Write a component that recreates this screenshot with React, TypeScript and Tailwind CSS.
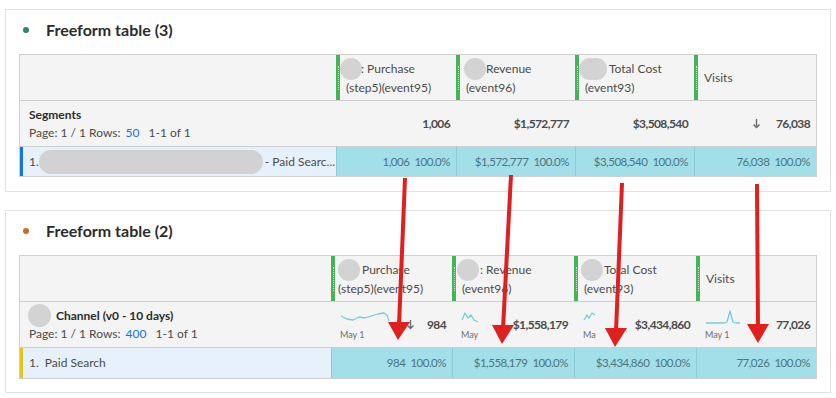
import React from 'react';

function Avatar({ className = '' }: { className?: string }) {
  return <span className={`inline-block w-[22px] h-[22px] rounded-full bg-[#d3d3d3] shrink-0 ${className}`} />;
}

function Handle() {
  return (
    <div className="w-1 self-stretch bg-[#44b455] flex items-center justify-center shrink-0">
      <div className="h-6 border-l border-dotted border-white/70" />
    </div>
  );
}

function HeadCell({ children, center = false }: { children?: React.ReactNode; center?: boolean }) {
  return (
    <div className="flex bg-[#f4f4f4] min-w-0">
      <Handle />
      <div
        className={`flex-1 min-w-0 pl-[6px] text-[12px] leading-[19px] text-[#4b4b4b] ${
          center ? 'flex items-center' : 'pt-[4px]'
        }`}
      >
        {children}
      </div>
    </div>
  );
}

function DownArrow() {
  return (
    <svg width="9" height="11" viewBox="0 0 9 11" className="shrink-0">
      <path d="M4.5 1 V9 M1.5 6.5 L4.5 9.5 L7.5 6.5" stroke="#6b6b6b" strokeWidth="1.4" fill="none" />
    </svg>
  );
}

function Total({ value, arrow = false }: { value: string; arrow?: boolean }) {
  return (
    <div className="flex items-center justify-end gap-[15px] pr-[6px] font-bold text-[12px] tracking-[-0.6px] text-[#4b4b4b]">
      {arrow && <DownArrow />}
      <span>{value}</span>
    </div>
  );
}

function Spark({
  d,
  w,
  label,
  value,
  arrow = false,
}: {
  d: string;
  w: number;
  label: string;
  value: string;
  arrow?: boolean;
}) {
  return (
    <div className="flex items-center justify-between pl-[9px] pr-[6px] min-w-0">
      <div className="flex flex-col self-stretch pt-[8px] min-w-0">
        <svg width={w} height="14" viewBox={`0 0 ${w} 14`} className="shrink-0">
          <path d={d} stroke="#6fd0d8" strokeWidth="1.3" fill="none" strokeLinejoin="round" />
        </svg>
        <span className="mt-[6px] text-[9px] leading-[10px] text-[#6e6e6e] whitespace-nowrap">{label}</span>
      </div>
      <div className="flex items-center gap-[12px] font-bold text-[12px] tracking-[-0.6px] text-[#4b4b4b]">
        {arrow && <DownArrow />}
        <span>{value}</span>
      </div>
    </div>
  );
}

function DataCell({ value }: { value: string }) {
  return (
    <div className="flex items-center justify-end gap-[5px] pr-[6px] bg-[#a2dfe8] border-l border-[#8fcbd4] text-[11.5px] tracking-[-0.5px] text-[#4d7580] whitespace-nowrap">
      <span>{value}</span>
      <span>100.0%</span>
    </div>
  );
}

function Title({ text, dot }: { text: string; dot: string }) {
  return (
    <div className="flex items-center h-6 mb-3">
      <span className={`w-[6px] h-[6px] rounded-full ml-[4px] ${dot}`} />
      <span className="ml-[17px] text-[16px] font-bold text-[#2c2c2c]">{text}</span>
    </div>
  );
}

function PageLine({ rows }: { rows: string }) {
  return (
    <div className="text-[12px] leading-[18px] text-[#4b4b4b] whitespace-nowrap">
      Page: 1 / 1 Rows: <span className="text-[#1473e6] ml-[2px] mr-[6px]">{rows}</span> 1-1 of 1
    </div>
  );
}

export default function App() {
  return (
    <div className="relative w-[836px] h-[398px] bg-white overflow-hidden font-[Lato,sans-serif] px-[5px] pt-[9px]">
      {/* Freeform table (3) */}
      <div className="border border-[#e2e2e2] px-[13px] pt-[8px] pb-[14px]">
        <Title text="Freeform table (3)" dot="bg-[#2a8a63]" />
        <div className="border border-[#cfcfcf]">
          <div className="grid grid-cols-[316px_120px_119px_119px_1fr] h-[46px] border-b border-[#cfcfcf] bg-[#f4f4f4]">
            <div />
            <HeadCell>
              <div className="flex items-center h-[19px] -ml-[6px]">
                <Avatar />
                <span className="-ml-[1px]">: Purchase</span>
              </div>
              <div>(step5)(event95)</div>
            </HeadCell>
            <HeadCell>
              <div className="flex items-center h-[19px] -ml-[2px]">
                <Avatar />
                <span>Revenue</span>
              </div>
              <div>(event96)</div>
            </HeadCell>
            <HeadCell>
              <div className="flex items-center h-[19px] -ml-[6px]">
                <Avatar />
                <Avatar className="-ml-[16px]" />
                <span className="ml-[2px]">Total Cost</span>
              </div>
              <div>(event93)</div>
            </HeadCell>
            <HeadCell center>Visits</HeadCell>
          </div>
          <div className="grid grid-cols-[316px_120px_119px_119px_1fr] h-[46px] border-b border-[#cfcfcf] bg-[#f4f4f4]">
            <div className="flex flex-col justify-center pl-[9px]">
              <div className="text-[12px] leading-[18px] font-bold text-[#2c2c2c]">Segments</div>
              <PageLine rows="50" />
            </div>
            <Total value="1,006" />
            <Total value="$1,572,777" />
            <Total value="$3,508,540" />
            <Total value="76,038" arrow />
          </div>
          <div className="grid grid-cols-[316px_120px_119px_119px_1fr] h-[29px]">
            <div className="flex items-center bg-[#e7f1fc] border-l-[3px] border-[#1473e6] pl-[6px] text-[12px] text-[#4b4b4b] whitespace-nowrap">
              <span>1.</span>
              <span className="w-[224px] h-[24px] rounded-full bg-[#d2d2d2] shrink-0" />
              <span className="ml-[2px]">- Paid Searc...</span>
            </div>
            <DataCell value="1,006" />
            <DataCell value="$1,572,777" />
            <DataCell value="$3,508,540" />
            <DataCell value="76,038" />
          </div>
        </div>
      </div>

      {/* Freeform table (2) */}
      <div className="mt-[18px] border border-[#e2e2e2] px-[13px] pt-[8px] pb-[13px]">
        <Title text="Freeform table (2)" dot="bg-[#d26a1e]" />
        <div className="border border-[#cfcfcf]">
          <div className="grid grid-cols-[311px_121px_122px_122px_1fr] h-[46px] border-b border-[#cfcfcf] bg-[#f4f4f4]">
            <div />
            <HeadCell>
              <div className="flex items-center h-[19px] -ml-[3px]">
                <Avatar />
                <span className="ml-[2px]">Purchase</span>
              </div>
              <div className="-ml-[3px]">(step5)(event95)</div>
            </HeadCell>
            <HeadCell>
              <div className="flex items-center h-[19px] -ml-[5px]">
                <Avatar />
                <span className="ml-[1px]">: Revenue</span>
              </div>
              <div>(event96)</div>
            </HeadCell>
            <HeadCell>
              <div className="flex items-center h-[19px] -ml-[3px]">
                <Avatar />
                <span className="ml-[1px]">Total Cost</span>
              </div>
              <div>(event93)</div>
            </HeadCell>
            <HeadCell center>Visits</HeadCell>
          </div>
          <div className="grid grid-cols-[311px_121px_122px_122px_1fr] h-[46px] border-b border-[#cfcfcf] bg-[#f4f4f4]">
            <div className="flex flex-col justify-center pl-[8px]">
              <div className="flex items-center h-[18px]">
                <Avatar className="w-[23px] h-[23px]" />
                <span className="ml-[5px] text-[12px] font-bold text-[#2c2c2c]">Channel (v0 - 10 days)</span>
              </div>
              <div className="pl-[1px]">
                <PageLine rows="400" />
              </div>
            </div>
            <Spark
              w={50}
              d="M1 6 L7 9 L13 10 L19 7 L25 8 L31 6 L38 4 L44 3 L47 5 L49 11"
              label="May 1"
              value="984"
              arrow
            />
            <Spark w={18} d="M1 10 L4 3 L7 8 L10 5 L13 10 L17 12" label="May" value="$1,558,179" />
            <Spark w={13} d="M1 10 L4 5 L6 8 L9 3 L12 5" label="Ma" value="$3,434,860" />
            <Spark w={36} d="M1 13 L19 13 L22 12 L25 1 L28 12 L31 13 L35 13" label="May 1" value="77,026" />
          </div>
          <div className="grid grid-cols-[311px_121px_122px_122px_1fr] h-[30px]">
            <div className="flex items-center bg-[#e7f1fc] border-l-[3px] border-[#e2c21b] pl-[6px] text-[12px] text-[#4b4b4b]">
              <span>1.</span>
              <span className="ml-[6px]">Paid Search</span>
            </div>
            <DataCell value="984" />
            <DataCell value="$1,558,179" />
            <DataCell value="$3,434,860" />
            <DataCell value="77,026" />
          </div>
        </div>
      </div>

      {/* red annotation arrows */}
      <svg className="absolute left-0 top-0 pointer-events-none" width="836" height="398" viewBox="0 0 836 398">
        <g stroke="#e01f1f" strokeWidth="4" fill="none">
          <line x1="405" y1="178" x2="399" y2="326" />
          <line x1="511" y1="175" x2="503" y2="329" />
          <line x1="622" y1="183" x2="616" y2="332" />
          <line x1="757" y1="184" x2="758" y2="328" />
        </g>
        <g fill="#e01f1f">
          <polygon points="388,322 410,322 398,340" />
          <polygon points="492,325 514,325 502,344" />
          <polygon points="605,328 627,328 615,347" />
          <polygon points="747,324 769,324 758,343" />
        </g>
      </svg>
    </div>
  );
}
